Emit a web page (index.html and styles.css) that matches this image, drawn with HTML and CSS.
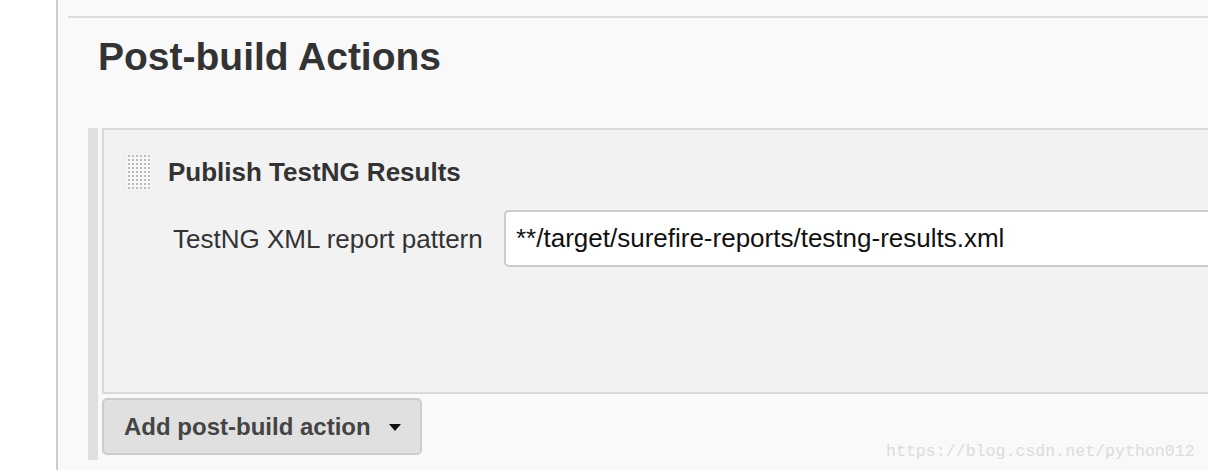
FILE: index.html
```html
<!DOCTYPE html>
<html>
<head>
<meta charset="utf-8">
<link rel="stylesheet" href="styles.css">
</head>
<body>
<div class="page">
  <div class="gutter"></div>
  <div class="main">
    <div class="topline"></div>
    <h1 class="heading">Post-build Actions</h1>
    <div class="section">
      <div class="bar"></div>
      <div class="column">
        <div class="panel">
          <div class="panel-title">
            <span class="handle"></span>
            <span class="title-text">Publish TestNG Results</span>
          </div>
          <div class="field-row">
            <label class="field-label">TestNG XML report pattern</label>
            <div class="field-input">**/target/surefire-reports/testng-results.xml</div>
          </div>
        </div>
        <div class="add-button">
          <span>Add post-build action</span>
          <span class="caret"></span>
        </div>
      </div>
    </div>
  </div>
</div>
<div class="watermark">https://blog.csdn.net/python012</div>
</body>
</html>
```
FILE: styles.css
```css
html, body {
  margin: 0;
  padding: 0;
  background: #ffffff;
  width: 1208px;
  height: 470px;
  overflow: hidden;
  font-family: "Liberation Sans", Arial, sans-serif;
  color: #333333;
}
.page {
  display: flex;
  height: 470px;
}
.gutter {
  width: 56px;
  flex: none;
  background: #ffffff;
}
.main {
  flex: 1;
  background: #f9f9f9;
  border-left: 2px solid #cccccc;
  padding-left: 10px;
  min-width: 0;
}
.topline {
  margin-top: 16px;
  height: 2px;
  background: #dddddd;
}
.heading {
  margin: 17px 0 0 30px;
  font-size: 39px;
  line-height: 44px;
  font-weight: bold;
  color: #333333;
}
.section {
  display: flex;
  margin: 49px 0 0 20px;
  height: 332px;
}
.bar {
  width: 10px;
  flex: none;
  background: #e0e0e0;
}
.column {
  flex: 1;
  margin-left: 4px;
  display: flex;
  flex-direction: column;
  gap: 4px;
  min-width: 0;
}
.panel {
  box-sizing: border-box;
  height: 266px;
  flex: none;
  background: #f2f2f2;
  border: 2px solid #d9d9d9;
  border-right: none;
  padding: 24px 0 0 23px;
}
.panel-title {
  display: flex;
  align-items: center;
  gap: 17px;
}
.handle {
  width: 24px;
  height: 36px;
  background-image: radial-gradient(circle, #bcbcbc 0.9px, transparent 1.3px);
  background-size: 4px 4px;
  background-color: #f7f7f7;
}
.title-text {
  font-size: 26px;
  font-weight: bold;
  line-height: 30px;
  color: #333333;
}
.field-row {
  display: flex;
  align-items: center;
  margin-top: 20px;
}
.field-label {
  font-size: 26px;
  line-height: 30px;
  color: #333333;
  width: 377px;
  padding-left: 46px;
  box-sizing: border-box;
  flex: none;
}
.field-input {
  flex: 1;
  height: 53px;
  line-height: 53px;
  background: #ffffff;
  border: 2px solid #cccccc;
  border-right: none;
  border-radius: 5px 0 0 5px;
  padding-left: 10px;
  font-size: 26px;
  color: #111111;
  white-space: nowrap;
}
.add-button {
  align-self: flex-start;
  box-sizing: border-box;
  width: 320px;
  height: 57px;
  flex: none;
  background: #e0e0e0;
  border: 2px solid #cccccc;
  border-radius: 5px;
  display: flex;
  align-items: center;
  padding-left: 20px;
  font-size: 24px;
  font-weight: bold;
  color: #444444;
}
.caret {
  margin-left: 18px;
  width: 0;
  height: 0;
  border-left: 6.5px solid transparent;
  border-right: 6.5px solid transparent;
  border-top: 7px solid #111111;
  margin-top: 2px;
}
.watermark {
  position: absolute;
  left: 886px;
  top: 442px;
  font-family: "Liberation Mono", "DejaVu Sans Mono", monospace;
  font-size: 16.6px;
  line-height: 20px;
  color: #dcdcdc;
}
```
